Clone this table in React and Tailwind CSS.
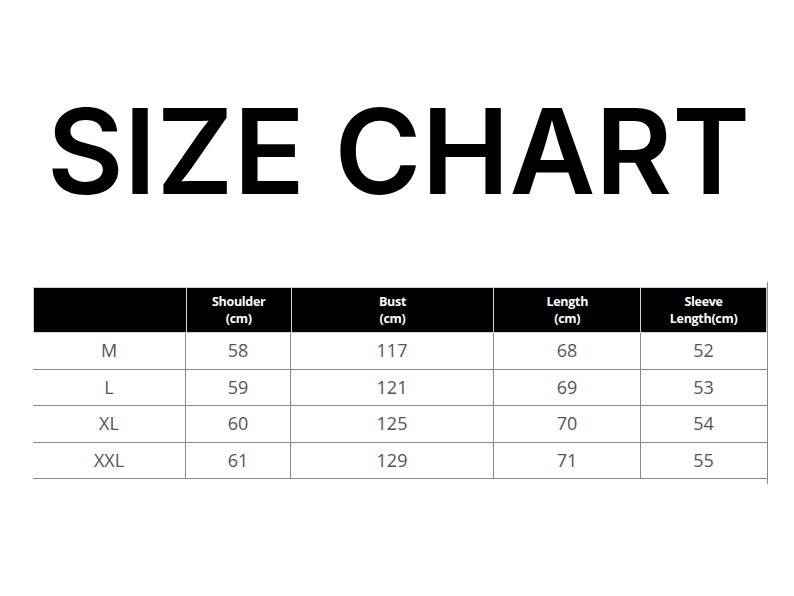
export default function App() {
  const rows = [
    ["M", "58", "117", "68", "52"],
    ["L", "59", "121", "69", "53"],
    ["XL", "60", "125", "70", "54"],
    ["XXL", "61", "129", "71", "55"],
  ];
  const widths = ["w-[152px]", "w-[105px]", "w-[203px]", "w-[147px]", "w-[126px]"];
  return (
    <div className="w-[794px] h-[596px] bg-white relative overflow-hidden">
      <h1 className="pt-[81px] pl-[47px] text-[118px] leading-[140px] font-semibold text-black whitespace-nowrap tracking-[0px]" style={{ fontFamily: "Inter, sans-serif" }}>
        SIZE CHART
      </h1>
      <div className="mt-[66px] ml-[33px] w-[734px] relative" style={{ fontFamily: "'Open Sans', sans-serif" }}>
        <div className="flex h-[46px] bg-black border border-[#cfcfcf]">
          {["", "Shoulder\n(cm)", "Bust\n(cm)", "Length\n(cm)", "Sleeve\nLength(cm)"].map((t, i) => (
            <div key={i} className={`${widths[i]} ${i > 0 ? "border-l border-[#cfcfcf]" : ""} flex items-center justify-center text-center text-white text-[12.5px] leading-[17px] font-bold whitespace-pre tracking-[-0.3px]`}>
              {t}
            </div>
          ))}
        </div>
        {rows.map((r, ri) => (
          <div key={ri} className="flex h-[36.5px] border-b border-[#8a8a8a]">
            {r.map((c, i) => (
              <div key={i} className={`${widths[i]} ${i > 0 ? "border-l border-[#8a8a8a]" : ""} flex items-center justify-center text-[18px] text-[#555]`}>
                {c}
              </div>
            ))}
          </div>
        ))}
        <div className="absolute right-[-1px] top-[-5px] bottom-[-5px] w-[1px] bg-[#8a8a8a]" />
      </div>
    </div>
  );
}
